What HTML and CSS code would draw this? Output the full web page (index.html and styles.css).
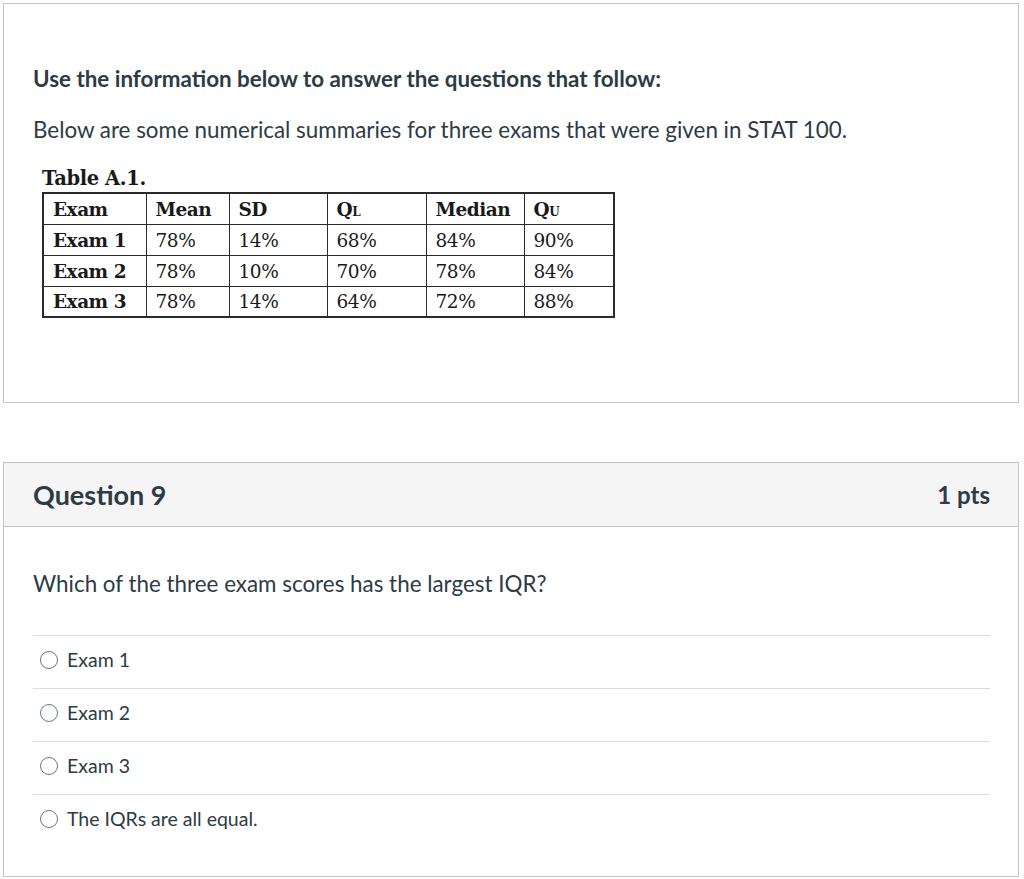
FILE: index.html
```html
<!DOCTYPE html>
<html lang="en">
<head>
<meta charset="utf-8">
<title>Quiz</title>
<link rel="stylesheet" href="styles.css">
</head>
<body>
<div class="page">
  <section class="panel info">
    <p class="lead">Use the information below to answer the questions that follow:</p>
    <p class="desc">Below are some numerical summaries for three exams that were given in STAT 100.</p>
    <div class="figure">
      <div class="caption">Table A.1.</div>
      <table class="stats">
        <colgroup>
          <col class="c1"><col class="c2"><col class="c3"><col class="c4"><col class="c5"><col class="c6">
        </colgroup>
        <tr class="head"><th>Exam</th><th>Mean</th><th>SD</th><th>Q<span class="sub">L</span></th><th>Median</th><th>Q<span class="sub">U</span></th></tr>
        <tr><th>Exam 1</th><td>78%</td><td>14%</td><td>68%</td><td>84%</td><td>90%</td></tr>
        <tr><th>Exam 2</th><td>78%</td><td>10%</td><td>70%</td><td>78%</td><td>84%</td></tr>
        <tr><th>Exam 3</th><td>78%</td><td>14%</td><td>64%</td><td>72%</td><td>88%</td></tr>
      </table>
    </div>
  </section>

  <section class="panel question">
    <header class="q-header">
      <h2 class="q-title">Question 9</h2>
      <span class="q-points">1 pts</span>
    </header>
    <div class="q-body">
      <p class="q-text">Which of the three exam scores has the largest IQR?</p>
      <ul class="answers">
        <li class="answer"><span class="radio"></span><span class="label">Exam 1</span></li>
        <li class="answer"><span class="radio"></span><span class="label">Exam 2</span></li>
        <li class="answer"><span class="radio"></span><span class="label">Exam 3</span></li>
        <li class="answer"><span class="radio"></span><span class="label">The IQRs are all equal.</span></li>
      </ul>
    </div>
  </section>
</div>
</body>
</html>
```

FILE: styles.css
```css
* { box-sizing: border-box; }
html, body { margin: 0; padding: 0; background: #fff; }
body {
  font-family: Lato, "Noto Sans", sans-serif;
  color: #2d3b45;
}
.page {
  padding: 3px 5px 0 3px;
  display: flex;
  flex-direction: column;
  gap: 59px;
}
.panel {
  border: 1px solid #c1c5c8;
  background: #fff;
}
.info {
  height: 400px;
  padding: 60px 29px 0 29px;
}
.lead {
  margin: 0;
  font-size: 22.4px;
  line-height: 30px;
  font-weight: 700;
}
.desc {
  margin: 21px 0 0 0;
  font-size: 22.4px;
  line-height: 30px;
  font-weight: 400;
}
.figure {
  margin: 22px 0 0 9px;
  font-family: "DejaVu Serif", "Liberation Serif", serif;
  color: #1a1a1a;
}
.caption {
  font-size: 19.5px;
  font-weight: 700;
  line-height: 24px;
  margin-bottom: 1px;
  letter-spacing: -0.4px;
}
.stats {
  border-collapse: collapse;
  border: 2px solid #2a2a2a;
  font-size: 18.5px;
  table-layout: fixed;
  width: 571px;
}
.stats col.c1 { width: 103px; }
.stats col.c2 { width: 83px; }
.stats col.c3 { width: 98px; }
.stats col.c4 { width: 99px; }
.stats col.c5 { width: 98px; }
.stats col.c6 { width: 90px; }
.stats th, .stats td {
  border: 1.5px solid #2a2a2a;
  height: 31px;
  padding: 1px 0 0 9px;
  text-align: left;
  vertical-align: middle;
  white-space: nowrap;
  overflow: hidden;
}
.stats th { font-weight: 700; letter-spacing: -0.5px; }
.stats td { font-weight: 400; letter-spacing: -0.4px; }
.stats .sub { font-size: 12px; }

.question { height: 415px; display: flex; flex-direction: column; }
.q-header {
  background: #f5f5f5;
  border-bottom: 1px solid #c1c5c8;
  height: 64px;
  display: flex;
  align-items: center;
  justify-content: space-between;
  padding: 0 28px 0 29px;
}
.q-title {
  margin: 0;
  font-size: 27px;
  font-weight: 700;
}
.q-points {
  font-size: 24px;
  font-weight: 700;
}
.q-body {
  padding: 41px 28px 0 29px;
}
.q-text {
  margin: 0;
  font-size: 22.4px;
  line-height: 32px;
}
.answers {
  list-style: none;
  margin: 35px 0 0 0;
  padding: 0;
}
.answer {
  border-top: 1px solid #dadcde;
  height: 53px;
  display: flex;
  align-items: center;
  padding: 0 0 4px 7px;
}
.radio {
  width: 18px;
  height: 18px;
  border: 1.5px solid #6b7780;
  border-radius: 50%;
  flex: none;
  margin-right: 9px;
  background: #fff;
}
.label {
  font-size: 19.5px;
  line-height: 24px;
}
```
